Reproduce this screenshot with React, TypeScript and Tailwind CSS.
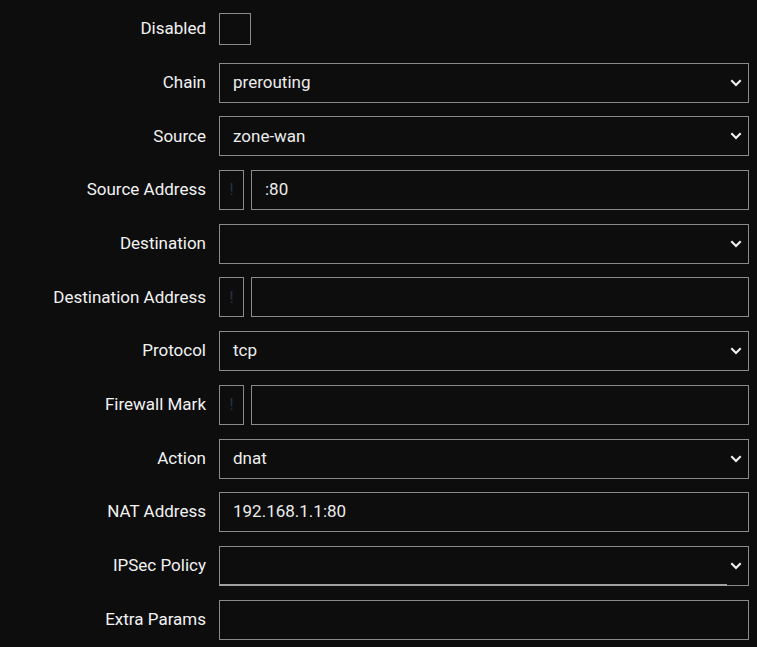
import React from 'react';

type Field =
  | { label: string; kind: 'checkbox' }
  | { label: string; kind: 'select'; value: string; underline?: boolean }
  | { label: string; kind: 'text'; value: string }
  | { label: string; kind: 'negate'; value: string };

const fields: Field[] = [
  { label: 'Disabled', kind: 'checkbox' },
  { label: 'Chain', kind: 'select', value: 'prerouting' },
  { label: 'Source', kind: 'select', value: 'zone-wan' },
  { label: 'Source Address', kind: 'negate', value: ':80' },
  { label: 'Destination', kind: 'select', value: '' },
  { label: 'Destination Address', kind: 'negate', value: '' },
  { label: 'Protocol', kind: 'select', value: 'tcp' },
  { label: 'Firewall Mark', kind: 'negate', value: '' },
  { label: 'Action', kind: 'select', value: 'dnat' },
  { label: 'NAT Address', kind: 'text', value: '192.168.1.1:80' },
  { label: 'IPSec Policy', kind: 'select', value: '', underline: true },
  { label: 'Extra Params', kind: 'text', value: '' },
];

const Chevron = () => (
  <svg width="12" height="8" viewBox="0 0 12 8" className="shrink-0 mr-[1px]">
    <path d="M1.3 1.3 L6 6 L10.7 1.3" fill="none" stroke="#f2f2f2" strokeWidth="2.1" />
  </svg>
);

const box = 'h-10 border border-[#8a8a8a] bg-[#0d0d0d] text-[17px]';

const Control = ({ field }: { field: Field }) => {
  switch (field.kind) {
    case 'checkbox':
      return <div className="w-8 h-8 border border-[#8a8a8a]" />;
    case 'select':
      return (
        <div className={`${box} text-[#ececec] relative w-full flex items-center pl-[13px] pr-[5px]`}>
          <span className="flex-1">{field.value}</span>
          <Chevron />
          {field.underline && (
            <span className="absolute left-[-1px] bottom-[-1px] w-[508px] h-[2px] bg-[#a0a0a0]" />
          )}
        </div>
      );
    case 'text':
      return <div className={`${box} text-[#ececec] w-full flex items-center px-[13px]`}>{field.value}</div>;
    case 'negate':
      return (
        <div className="flex w-full gap-[7px]">
          <div className={`${box} w-[25px] shrink-0 flex items-center justify-center text-[#26323c]`}>!</div>
          <div className={`${box} text-[#ececec] flex-1 flex items-center px-[13px]`}>{field.value}</div>
        </div>
      );
  }
};

export default function App() {
  return (
    <div
      className="min-h-screen bg-[#0d0d0d] pt-[9px]"
      style={{ fontFamily: 'Roboto, "Liberation Sans", sans-serif' }}
    >
      <div className="flex flex-col gap-[13.7px] w-[749px]">
        {fields.map((f) => (
          <div key={f.label} className="grid grid-cols-[206px_530px] gap-x-[13px] items-center h-10">
            <label className="text-right text-[17px] text-[#f2f2f2] whitespace-nowrap">{f.label}</label>
            <Control field={f} />
          </div>
        ))}
      </div>
    </div>
  );
}
